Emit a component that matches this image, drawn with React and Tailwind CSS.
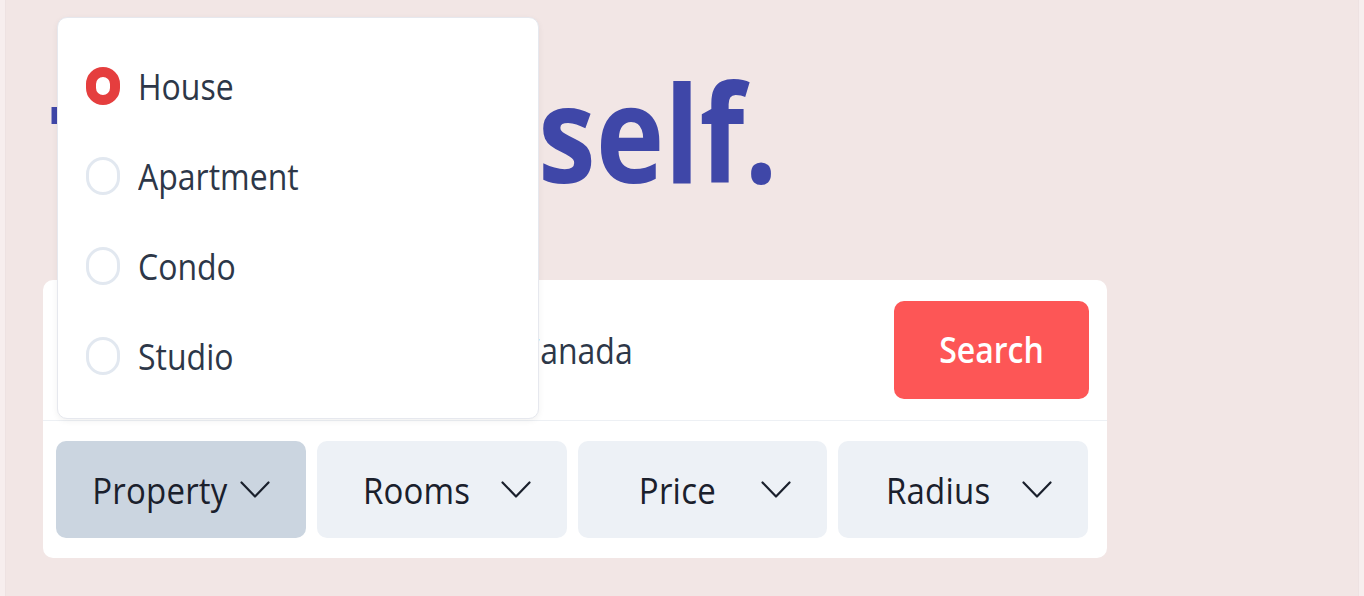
import React from "react";

const FONT = { fontFamily: '"Open Sans", "Noto Sans", sans-serif' };

function Chevron() {
  return (
    <svg width="30" height="17" viewBox="0 0 30 17" fill="none" className="shrink-0">
      <polyline points="1.5,1.5 15,15.5 28.5,1.5" stroke="#1a202c" strokeWidth="2.2" strokeLinecap="round" strokeLinejoin="round" />
    </svg>
  );
}

function Radio({ label, checked }) {
  return (
    <div className="flex h-[90px] items-center gap-[18px]">
      {checked ? (
        <span className="h-[38px] w-[34px] shrink-0 rounded-full border-[10px] border-[#e53e3e] bg-white" />
      ) : (
        <span className="h-[38px] w-[34px] shrink-0 rounded-full border-[3px] border-[#e2e8f0] bg-white" />
      )}
      <span className="inline-block scale-y-[1.13] text-[32px] leading-none text-[#2d3748]">{label}</span>
    </div>
  );
}

function FilterButton({ label, active, gap }) {
  return (
    <button
      className={
        "flex h-full items-center rounded-[10px] px-[36px] " +
        (active ? "bg-[#cbd5e0] " : "bg-[#edf1f6] ") +
        gap
      }
    >
      <span className="inline-block flex-1 scale-y-[1.13] whitespace-nowrap text-center text-[33px] font-medium leading-none tracking-[0.2px] text-[#1a202c]">
        {label}
      </span>
      <Chevron />
    </button>
  );
}

export default function App() {
  return (
    <div className="flex h-[596px] w-[1364px] overflow-hidden bg-[#f2e6e5]" style={FONT}>
      <div className="w-[6px] shrink-0 border-r border-[#eee2e2] bg-[#f7eeee]" />
      <main className="relative flex flex-1 flex-col pl-[37px]">
        <h1 className="mt-[75px] flex h-[112px] items-center whitespace-nowrap text-[116px] font-bold leading-none text-[#3f47a8]">
          <span className="ml-[7px] inline-block w-[488px] scale-y-[1.16] overflow-hidden">
            <span className="font-['DejaVu_Sans',sans-serif]">t</span>o your
          </span>
          <span className="inline-block scale-y-[1.16]">self.</span>
        </h1>

        <div className="mt-[93px] flex h-[278px] w-[1064px] flex-col rounded-[10px] bg-white">
          <div className="flex h-[141px] items-center justify-between border-b border-[#edf0f4] pr-[18px]">
            <span className="ml-[477px] inline-block scale-y-[1.13] text-[32px] leading-none text-[#2d3748]">Canada</span>
            <button className="h-[98px] w-[195px] rounded-[10px] bg-[#fd5656]">
              <span className="inline-block scale-y-[1.13] text-[32px] font-semibold leading-none text-white">Search</span>
            </button>
          </div>
          <div className="grid flex-1 grid-cols-4 gap-[11px] py-[20px] pl-[13px] pr-[19px]">
            <FilterButton label="Property" active gap="gap-[12px]" />
            <FilterButton label="Rooms" gap="gap-[20px]" />
            <FilterButton label="Price" gap="gap-[20px]" />
            <FilterButton label="Radius" gap="gap-[20px]" />
          </div>
        </div>

        <div className="absolute left-[51px] top-[17px] h-[402px] w-[482px] rounded-[10px] border border-[#e6e8ee] bg-white pl-[28px] pt-[23px] shadow-[0_2px_6px_rgba(0,0,0,0.06)]">
          <Radio label="House" checked />
          <Radio label="Apartment" />
          <Radio label="Condo" />
          <Radio label="Studio" />
        </div>
      </main>
      <div className="w-[6px] shrink-0 border-l border-[#eee2e2] bg-[#f7eeee]" />
    </div>
  );
}
